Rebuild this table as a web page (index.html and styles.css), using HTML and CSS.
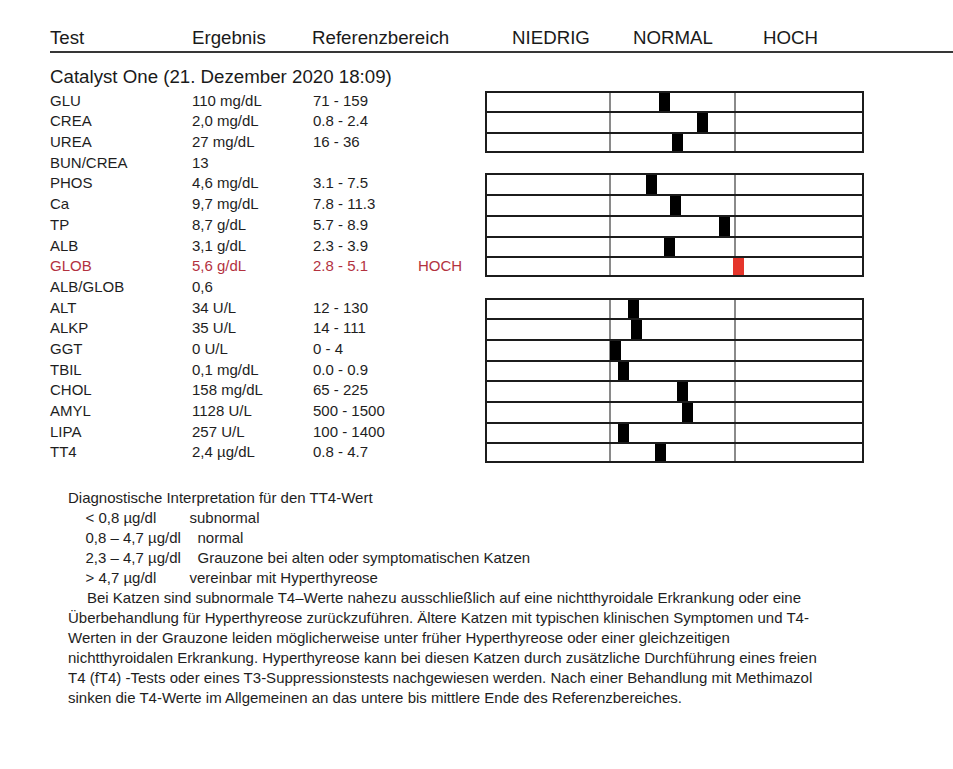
FILE: index.html
```html
<!DOCTYPE html>
<html lang="de">
<head>
<meta charset="utf-8">
<title>Catalyst One Befund</title>
<link rel="stylesheet" href="styles.css">
</head>
<body>
<div class="report">
  <div class="head">
    <span>Test</span><span>Ergebnis</span><span>Referenzbereich</span><span>NIEDRIG</span><span>NORMAL</span><span>HOCH</span>
  </div>
  <h2 class="run">Catalyst One (21. Dezember 2020 18:09)</h2>
  <div class="results">
    <div class="row"><span>GLU</span><span>110 mg/dL</span><span>71 - 159</span><span></span><div class="bar"><i></i><i></i><i></i><b class="mark" style="left:172px"></b></div></div>
    <div class="row"><span>CREA</span><span>2,0 mg/dL</span><span>0.8 - 2.4</span><span></span><div class="bar"><i></i><i></i><i></i><b class="mark" style="left:210px"></b></div></div>
    <div class="row"><span>UREA</span><span>27 mg/dL</span><span>16 - 36</span><span></span><div class="bar last"><i></i><i></i><i></i><b class="mark" style="left:185px"></b></div></div>
    <div class="row"><span>BUN/CREA</span><span>13</span><span></span><span></span><span></span></div>
    <div class="row"><span>PHOS</span><span>4,6 mg/dL</span><span>3.1 - 7.5</span><span></span><div class="bar"><i></i><i></i><i></i><b class="mark" style="left:159px"></b></div></div>
    <div class="row"><span>Ca</span><span>9,7 mg/dL</span><span>7.8 - 11.3</span><span></span><div class="bar"><i></i><i></i><i></i><b class="mark" style="left:183px"></b></div></div>
    <div class="row"><span>TP</span><span>8,7 g/dL</span><span>5.7 - 8.9</span><span></span><div class="bar"><i></i><i></i><i></i><b class="mark" style="left:232px"></b></div></div>
    <div class="row"><span>ALB</span><span>3,1 g/dL</span><span>2.3 - 3.9</span><span></span><div class="bar"><i></i><i></i><i></i><b class="mark" style="left:177px"></b></div></div>
    <div class="row high"><span>GLOB</span><span>5,6 g/dL</span><span>2.8 - 5.1</span><span>HOCH</span><div class="bar last"><i></i><i></i><i></i><b class="mark mark-high" style="left:246px"></b></div></div>
    <div class="row"><span>ALB/GLOB</span><span>0,6</span><span></span><span></span><span></span></div>
    <div class="row"><span>ALT</span><span>34 U/L</span><span>12 - 130</span><span></span><div class="bar"><i></i><i></i><i></i><b class="mark" style="left:141px"></b></div></div>
    <div class="row"><span>ALKP</span><span>35 U/L</span><span>14 - 111</span><span></span><div class="bar"><i></i><i></i><i></i><b class="mark" style="left:144px"></b></div></div>
    <div class="row"><span>GGT</span><span>0 U/L</span><span>0 - 4</span><span></span><div class="bar"><i></i><i></i><i></i><b class="mark" style="left:123px"></b></div></div>
    <div class="row"><span>TBIL</span><span>0,1 mg/dL</span><span>0.0 - 0.9</span><span></span><div class="bar"><i></i><i></i><i></i><b class="mark" style="left:131px"></b></div></div>
    <div class="row"><span>CHOL</span><span>158 mg/dL</span><span>65 - 225</span><span></span><div class="bar"><i></i><i></i><i></i><b class="mark" style="left:190px"></b></div></div>
    <div class="row"><span>AMYL</span><span>1128 U/L</span><span>500 - 1500</span><span></span><div class="bar"><i></i><i></i><i></i><b class="mark" style="left:195px"></b></div></div>
    <div class="row"><span>LIPA</span><span>257 U/L</span><span>100 - 1400</span><span></span><div class="bar"><i></i><i></i><i></i><b class="mark" style="left:131px"></b></div></div>
    <div class="row"><span>TT4</span><span>2,4 µg/dL</span><span>0.8 - 4.7</span><span></span><div class="bar last"><i></i><i></i><i></i><b class="mark" style="left:168px"></b></div></div>
  </div>
  <div class="note">
    <div>Diagnostische Interpretation für den TT4-Wert</div>
    <div class="lvl"><span class="lvl-k">&lt; 0,8 µg/dl</span><span>subnormal</span></div>
    <div class="lvl"><span class="lvl-k lvl-wide">0,8 – 4,7 µg/dl</span><span>normal</span></div>
    <div class="lvl"><span class="lvl-k lvl-wide">2,3 – 4,7 µg/dl</span><span>Grauzone bei alten oder symptomatischen Katzen</span></div>
    <div class="lvl"><span class="lvl-k">&gt; 4,7 µg/dl</span><span>vereinbar mit Hyperthyreose</span></div>
    <p class="para">Bei Katzen sind subnormale T4–Werte nahezu ausschließlich auf eine nichtthyroidale Erkrankung oder eine<br>Überbehandlung für Hyperthyreose zurückzuführen. Ältere Katzen mit typischen klinischen Symptomen und T4-<br>Werten in der Grauzone leiden möglicherweise unter früher Hyperthyreose oder einer gleichzeitigen<br>nichtthyroidalen Erkrankung. Hyperthyreose kann bei diesen Katzen durch zusätzliche Durchführung eines freien<br>T4 (fT4) -Tests oder eines T3-Suppressionstests nachgewiesen werden. Nach einer Behandlung mit Methimazol<br>sinken die T4-Werte im Allgemeinen an das untere bis mittlere Ende des Referenzbereiches.</p>
  </div>
</div>
</body>
</html>
```

FILE: styles.css
```css
html, body {
  margin: 0;
  padding: 0;
  background: #ffffff;
}

body {
  font-family: "Liberation Sans", Arial, sans-serif;
  color: #1e1e1e;
}

.report {
  padding: 27px 0 0 50px;
}

.head {
  display: grid;
  grid-template-columns: 142px 120px 200px 121px 130px 1fr;
  font-size: 18.7px;
  line-height: 22px;
  padding-bottom: 1.5px;
  border-bottom: 2px solid #363636;
  color: #1a1a1a;
}

.run {
  margin: 13.5px 0 2.7px 0;
  font-size: 18.7px;
  line-height: 22px;
  font-weight: normal;
  color: #1a1a1a;
}

.results {
  display: flex;
  flex-direction: column;
}

.row {
  display: grid;
  grid-template-columns: 142px 121px 105px 67px 379px;
  height: 20.7px;
  font-size: 15px;
  line-height: 20.7px;
  white-space: nowrap;
}

.row.high {
  color: #b3323f;
}

.bar {
  position: relative;
  box-sizing: border-box;
  height: 20.7px;
  border: 2px solid #1c1c1c;
  border-bottom: 0;
  display: grid;
  grid-template-columns: 122px 125px 1fr;
}

.bar.last {
  border-bottom: 2px solid #1c1c1c;
}

.bar i + i {
  border-left: 2px solid #8a8a8a;
}

.mark {
  position: absolute;
  top: 0;
  bottom: 0;
  width: 11px;
  background: #000000;
}

.mark-high {
  background: #e5352b;
}

.note {
  margin-top: 25px;
  padding-left: 18px;
  font-size: 15px;
  line-height: 20px;
  color: #1e1e1e;
}

.lvl {
  padding-left: 17.5px;
  display: flex;
}

.lvl-k {
  width: 104px;
  flex: none;
}

.lvl-k.lvl-wide {
  width: 112px;
}

.para {
  margin: 0;
  text-indent: 19px;
  white-space: nowrap;
}
```
